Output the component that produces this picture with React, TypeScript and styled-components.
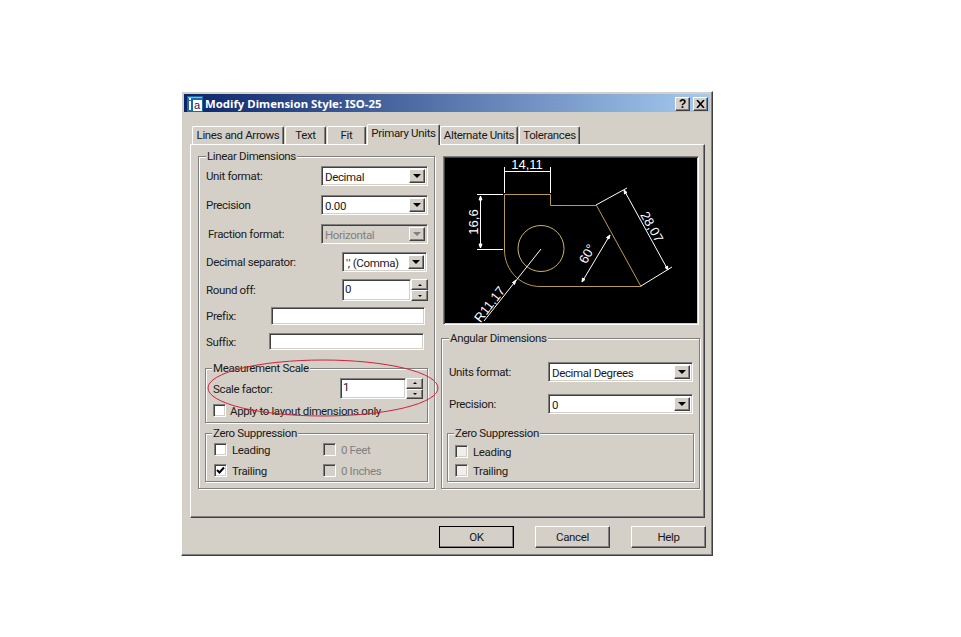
import styled, { createGlobalStyle, css } from 'styled-components';

const GlobalStyle = createGlobalStyle`
  html, body {
    margin: 0;
    background: #ffffff;
  }
  * {
    box-sizing: border-box;
  }
`;

const face = '#d4d0c8';

const raised = css`
  background: ${face};
  border-top: 1px solid #ffffff;
  border-left: 1px solid #ffffff;
  border-right: 1px solid #404040;
  border-bottom: 1px solid #404040;
  box-shadow: inset -1px -1px 0 #808080;
`;

const sunken = css`
  border-top: 1px solid #808080;
  border-left: 1px solid #808080;
  border-right: 1px solid #ffffff;
  border-bottom: 1px solid #ffffff;
  box-shadow: inset 1px 1px 0 #404040, inset -1px -1px 0 ${face};
`;

const Page = styled.div`
  width: 961px;
  height: 637px;
  padding: 91px 0 0 181px;
  background: #ffffff;
  font-family: Roboto, 'Liberation Sans', Arial, sans-serif;
  font-size: 11.5px;
  letter-spacing: -0.35px;
  color: #1a1a1a;
`;

const Window = styled.div`
  ${raised}
  width: 532px;
  height: 465px;
  padding: 2px;
  display: flex;
  flex-direction: column;
`;

const TitleBar = styled.div`
  height: 18px;
  padding: 1px 2px 0 3px;
  display: flex;
  align-items: center;
  background: linear-gradient(90deg, #0a246a 0%, #a6caf0 100%);
`;

const TitleText = styled.span`
  margin-left: 2px;
  flex: 1;
  color: #ffffff;
  font-family: 'Noto Sans', sans-serif;
  font-weight: 700;
  font-size: 11.4px;
  letter-spacing: 0;
`;

const CaptionButton = styled.div`
  ${raised}
  width: 15px;
  height: 14px;
  margin-left: 3px;
  display: flex;
  align-items: center;
  justify-content: center;
  font-family: 'Liberation Sans', sans-serif;
  font-weight: 700;
  font-size: 12px;
  line-height: 1;
  color: #000000;
`;

const TabBar = styled.div`
  height: 32px;
  padding: 11px 0 0 8px;
  display: flex;
  align-items: flex-end;
  position: relative;
  z-index: 1;
`;

const Tab = styled.div<{ $width: number; $gap: number; $active?: boolean }>`
  width: ${({ $width }) => $width}px;
  height: ${({ $active }) => ($active ? 21 : 18)}px;
  margin-right: ${({ $gap }) => $gap}px;
  margin-bottom: ${({ $active }) => ($active ? -1 : 0)}px;
  padding-bottom: ${({ $active }) => ($active ? 4 : 1)}px;
  display: flex;
  align-items: center;
  justify-content: center;
  background: ${face};
  border-top: 1px solid #ffffff;
  border-left: 1px solid #ffffff;
  border-right: 1px solid #404040;
  border-radius: 2px 2px 0 0;
  box-shadow: inset -1px 0 0 #808080;
  white-space: nowrap;
`;

const TabPanel = styled.div`
  ${raised}
  width: 515px;
  margin-left: 6px;
  height: 374px;
  padding: 11px 0 0 7px;
  display: flex;
  gap: 6px;
`;

const Column = styled.div`
  display: flex;
  flex-direction: column;
`;

const Group = styled.div<{ $width?: number; $height: number; $top?: number; $side?: number; $pad?: number }>`
  position: relative;
  width: ${({ $width }) => ($width ? `${$width}px` : 'auto')};
  height: ${({ $height }) => $height}px;
  margin: ${({ $top }) => $top ?? 0}px ${({ $side }) => $side ?? 0}px 0;
  padding-top: ${({ $pad }) => $pad ?? 9}px;
  border: 1px solid #808080;
  box-shadow: 1px 1px 0 #ffffff, inset 1px 1px 0 #ffffff;
`;

const Legend = styled.span<{ $left?: number }>`
  position: absolute;
  top: -8px;
  left: ${({ $left }) => $left ?? 7}px;
  padding: 0 1px;
  background: ${face};
  line-height: 14px;
  white-space: nowrap;
`;

const Row = styled.div<{ $height?: number; $top?: number; $left?: number; $right?: number }>`
  height: ${({ $height }) => $height ?? 20}px;
  margin-top: ${({ $top }) => $top ?? 0}px;
  padding: 0 ${({ $right }) => $right ?? 6}px 0 ${({ $left }) => $left ?? 7}px;
  display: flex;
  align-items: center;
  justify-content: space-between;
`;

const Combo = styled.div<{ $width: number; $disabled?: boolean }>`
  ${sunken}
  width: ${({ $width }) => $width}px;
  height: 100%;
  padding: 2px 2px 2px 3px;
  display: flex;
  align-items: center;
  background: ${({ $disabled }) => ($disabled ? face : '#ffffff')};
  color: ${({ $disabled }) => ($disabled ? '#808080' : '#1a1a1a')};
`;

const ComboValue = styled.span`
  flex: 1;
  padding-top: 1px;
  white-space: nowrap;
`;

const ComboArrow = styled.div<{ $disabled?: boolean }>`
  ${raised}
  width: 16px;
  height: 100%;
  display: flex;
  align-items: center;
  justify-content: center;
  &::after {
    content: '';
    border-left: 4px solid transparent;
    border-right: 4px solid transparent;
    border-top: 4px solid ${({ $disabled }) => ($disabled ? '#808080' : '#000000')};
  }
`;

const TextField = styled.div<{ $width: number }>`
  ${sunken}
  width: ${({ $width }) => $width}px;
  height: 100%;
  padding: 0 2px 3px;
  display: flex;
  align-items: center;
  background: #ffffff;
`;

const SpinWrap = styled.div`
  height: 100%;
  display: flex;
`;

const SpinColumn = styled.div`
  width: 17px;
  display: flex;
  flex-direction: column;
`;

const SpinButton = styled.div<{ $down?: boolean }>`
  ${raised}
  flex: 1;
  display: flex;
  align-items: center;
  justify-content: center;
  &::after {
    content: '';
    border-left: 2px solid transparent;
    border-right: 2px solid transparent;
    ${({ $down }) => ($down ? 'border-top: 2px solid #000000;' : 'border-bottom: 2px solid #000000;')}
  }
`;

const CheckRow = styled.div<{ $top?: number; $left?: number }>`
  height: 13px;
  margin-top: ${({ $top }) => $top ?? 0}px;
  padding-left: ${({ $left }) => $left ?? 7}px;
  display: flex;
  align-items: center;
`;

const CheckItem = styled.label<{ $width?: number; $gap?: number; $disabled?: boolean }>`
  width: ${({ $width }) => ($width ? `${$width}px` : 'auto')};
  display: flex;
  align-items: center;
  gap: ${({ $gap }) => $gap ?? 5}px;
  color: ${({ $disabled }) => ($disabled ? '#808080' : '#1a1a1a')};
  white-space: nowrap;
`;

const CheckBox = styled.span<{ $fill?: string }>`
  ${sunken}
  width: 13px;
  height: 13px;
  display: flex;
  align-items: center;
  justify-content: center;
  background: ${({ $fill }) => $fill ?? '#ffffff'};
`;

const Preview = styled.div`
  ${sunken}
  width: 256px;
  height: 169px;
  margin: 0 0 13px 2px;
  position: relative;
  background: #000000;
  overflow: hidden;
`;

const PreviewSvg = styled.svg`
  display: block;
  font-family: 'Liberation Sans', Arial, sans-serif;
  letter-spacing: 0;
`;

const Ellipse = styled.svg`
  position: absolute;
  left: 8px;
  top: 202px;
  overflow: visible;
  pointer-events: none;
`;

const Footer = styled.div`
  margin-top: 8px;
  padding-left: 255px;
  display: flex;
  gap: 21px;
`;

const PushButton = styled.div<{ $default?: boolean }>`
  ${raised}
  width: 75px;
  height: 22px;
  display: flex;
  align-items: center;
  justify-content: center;
  ${({ $default }) => $default && 'outline: 1px solid #000000; outline-offset: -1px;'}
`;

const Select = ({ width, value, disabled }: { width: number; value: string; disabled?: boolean }) => (
  <Combo $width={width} $disabled={disabled}>
    <ComboValue>{value}</ComboValue>
    <ComboArrow $disabled={disabled} />
  </Combo>
);

const Spinner = ({ width, value }: { width: number; value: string }) => (
  <SpinWrap>
    <TextField $width={width}>{value}</TextField>
    <SpinColumn>
      <SpinButton />
      <SpinButton $down />
    </SpinColumn>
  </SpinWrap>
);

const Check = ({
  label,
  width,
  gap,
  checked,
  disabled,
  fill,
}: {
  label: string;
  width?: number;
  gap?: number;
  checked?: boolean;
  disabled?: boolean;
  fill?: string;
}) => (
  <CheckItem $width={width} $gap={gap} $disabled={disabled}>
    <CheckBox $fill={disabled ? face : fill}>
      {checked && (
        <svg width="9" height="9" viewBox="0 0 9 9">
          <path d="M1 4l2.5 2.5L8 1.5" fill="none" stroke="#000" strokeWidth="2" />
        </svg>
      )}
    </CheckBox>
    {label}
  </CheckItem>
);

const tabs = [
  { label: 'Lines and Arrows', width: 92, gap: 1 },
  { label: 'Text', width: 41, gap: 1 },
  { label: 'Fit', width: 39, gap: 1 },
  { label: 'Primary Units', width: 73, gap: 0, active: true },
  { label: 'Alternate Units', width: 78, gap: 1 },
  { label: 'Tolerances', width: 61, gap: 0 },
];

// page coordinates of the preview are kept, the viewBox shifts them into the black area
const DimensionDrawing = () => (
  <PreviewSvg width="254" height="167" viewBox="444 157 254 167">
    <g fill="none" stroke="#b89c50" strokeWidth="1">
      <path d="M504.5 194.5H550.5V205.5H596.5L641 286.5H540C520 286.5 504.5 270 504.5 250Z" />
      <circle cx="541" cy="248.5" r="23" stroke="#c8b460" />
    </g>
    <g fill="none" stroke="#ffffff" strokeWidth="1">
      <path d="M504.5 167V193M550.5 167V193M504.5 171.5H550.5" />
      <path d="M477 194.5H503M477 249.5H503M480.5 196V248" />
      <path d="M596 205L627 188M641 286L672 267M624 190L668 270" />
      <path d="M582 282L610 235" />
      <path d="M541 249L484 321" />
    </g>
    <g fill="#ffffff" stroke="#ffffff">
      <path d="M480.5 196l-1.5 4h3zM480.5 248l-1.5-4h3zM624 190l.5 4 2.5-1.5zM668 270l-.5-4-2.5 1.5zM610 235l-3.5 2.5 2.5 1.5zM582 282l.5-4 2.5 1.5zM516 280l-3.5 2.5 2 2z" />
    </g>
    <g fill="#ffffff" fontSize="13" textAnchor="middle">
      <text x="527" y="169">14,11</text>
      <text transform="translate(478 222) rotate(-90)">16,6</text>
      <text transform="translate(648 229) rotate(61)">28,07</text>
      <text transform="translate(591 256) rotate(-61)">60°</text>
      <text transform="translate(493 307) rotate(-52)">R11,17</text>
    </g>
  </PreviewSvg>
);

const App = () => {
  return (
    <Page>
      <GlobalStyle />
      <Window>
        <TitleBar>
          <svg width="16" height="16" viewBox="0 0 16 16">
            <rect width="16" height="16" fill="#1c6aa8" />
            <rect x="6" y="4" width="9" height="11" fill="#ffffff" />
            <rect x="2" y="2" width="2" height="2" fill="#ffffff" />
            <rect x="2" y="5" width="2" height="9" fill="#ffffff" />
            <rect x="1" y="1" width="14" height="1" fill="#6fc4d8" />
            <text x="7" y="13" fontSize="11" fontFamily="Liberation Sans" fill="#0a246a">a</text>
          </svg>
          <TitleText>Modify Dimension Style: ISO-25</TitleText>
          <CaptionButton>?</CaptionButton>
          <CaptionButton>
            <svg width="9" height="8" viewBox="0 0 9 8">
              <path d="M1 0l7 8M8 0L1 8" stroke="#000" strokeWidth="1.6" />
            </svg>
          </CaptionButton>
        </TitleBar>

        <TabBar>
          {tabs.map(({ label, width, gap, active }) => (
            <Tab key={label} $width={width} $gap={gap} $active={active}>
              {label}
            </Tab>
          ))}
        </TabBar>

        <TabPanel>
          <Column>
            <Group $width={237} $height={333}>
              <Legend>Linear Dimensions</Legend>
              <Row>
                Unit format:
                <Select width={107} value="Decimal" />
              </Row>
              <Row $top={9}>
                Precision
                <Select width={107} value="0.00" />
              </Row>
              <Row $top={9} $left={9}>
                Fraction format:
                <Select width={107} value="Horizontal" disabled />
              </Row>
              <Row $top={8} $right={7}>
                Decimal separator:
                <Select width={85} value="',' (Comma)" />
              </Row>
              <Row $top={7} $height={22}>
                Round off:
                <Spinner width={69} value="0" />
              </Row>
              <Row $top={6} $height={18} $right={9}>
                Prefix:
                <TextField $width={154} />
              </Row>
              <Row $top={8} $height={17} $right={10}>
                Suffix:
                <TextField $width={155} />
              </Row>

              <Group $height={55} $top={18} $side={6} $pad={9}>
                <Legend $left={6}>Measurement Scale</Legend>
                <Row $height={21} $left={7} $right={4}>
                  Scale factor:
                  <Spinner width={66} value="1" />
                </Row>
                <CheckRow $top={5} $left={7}>
                  <Check label="Apply to layout dimensions only" gap={4} />
                </CheckRow>
              </Group>

              <Group $height={49} $top={10} $side={6} $pad={9}>
                <Legend $left={6}>Zero Suppression</Legend>
                <CheckRow $left={8}>
                  <Check label="Leading" width={109} />
                  <Check label="0 Feet" disabled />
                </CheckRow>
                <CheckRow $top={8} $left={8}>
                  <Check label="Trailing" width={109} checked />
                  <Check label="0 Inches" disabled />
                </CheckRow>
              </Group>

              <Ellipse width="232" height="58">
                <ellipse cx="116" cy="29" rx="115" ry="28" fill="none" stroke="#d2203c" strokeWidth="1" />
              </Ellipse>
            </Group>
          </Column>

          <Column>
            <Preview>
              <DimensionDrawing />
            </Preview>
            <Group $width={259} $height={151} $pad={23}>
              <Legend>Angular Dimensions</Legend>
              <Row $right={6}>
                Units format:
                <Select width={145} value="Decimal Degrees" />
              </Row>
              <Row $top={12} $right={6}>
                Precision:
                <Select width={145} value="0" />
              </Row>
              <Group $height={49} $top={19} $side={5} $pad={11}>
                <Legend $left={6}>Zero Suppression</Legend>
                <CheckRow $left={7}>
                  <Check label="Leading" fill="#f0efe9" />
                </CheckRow>
                <CheckRow $top={6} $left={7}>
                  <Check label="Trailing" fill="#f0efe9" />
                </CheckRow>
              </Group>
            </Group>
          </Column>
        </TabPanel>

        <Footer>
          <PushButton $default>OK</PushButton>
          <PushButton>Cancel</PushButton>
          <PushButton>Help</PushButton>
        </Footer>
      </Window>
    </Page>
  );
};

export default App;
